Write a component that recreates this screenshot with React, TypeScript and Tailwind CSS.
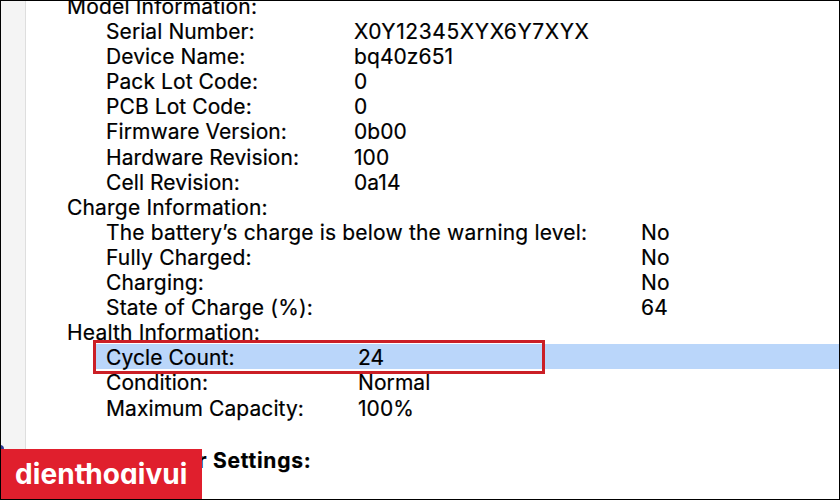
import { clsx } from "clsx";

type Row = { label: string; value: string; wide?: boolean; selected?: boolean };
type Section = { title: string; columns: string; tight?: boolean; rows: Row[] };

const sections: Section[] = [
  {
    title: "Model Information:",
    columns: "grid-cols-[248px_1fr]",
    tight: true,
    rows: [
      { label: "Serial Number:", value: "X0Y12345XYX6Y7XYX", wide: true },
      { label: "Device Name:", value: "bq40z651" },
      { label: "Pack Lot Code:", value: "0" },
      { label: "PCB Lot Code:", value: "0" },
      { label: "Firmware Version:", value: "0b00" },
      { label: "Hardware Revision:", value: "100" },
      { label: "Cell Revision:", value: "0a14" },
    ],
  },
  {
    title: "Charge Information:",
    columns: "grid-cols-[535px_1fr]",
    rows: [
      { label: "The battery’s charge is below the warning level:", value: "No" },
      { label: "Fully Charged:", value: "No" },
      { label: "Charging:", value: "No" },
      { label: "State of Charge (%):", value: "64" },
    ],
  },
  {
    title: "Health Information:",
    columns: "grid-cols-[252px_1fr]",
    tight: true,
    rows: [
      { label: "Cycle Count:", value: "24", selected: true },
      { label: "Condition:", value: "Normal" },
      { label: "Maximum Capacity:", value: "100%" },
    ],
  },
];

export default function App() {
  return (
    <div className="relative flex h-[500px] w-[840px] overflow-hidden bg-white font-['Inter',sans-serif] text-[21px] leading-[25.1px] tracking-[0.18px] text-black [-webkit-text-stroke:0.2px_#000]">
      <div className="w-[26px] shrink-0 border-r border-[#dedede] bg-[#f4f4f4]" />
      <main className="-mt-[6px] flex-1">
        {sections.map((s) => (
          <section key={s.title}>
            <h2 className="pl-[41px]">{s.title}</h2>
            <div className={clsx(s.tight && "tracking-[0.08px]")}>
              {s.rows.map((r) => (
                <InfoRow key={r.label} row={r} columns={s.columns} />
              ))}
            </div>
          </section>
        ))}
        <h2 className="mt-[27px] pl-[172px] font-bold tracking-[0.75px]">r Settings:</h2>
      </main>

      {/* marker around the cycle count */}
      <div className="absolute top-[340px] left-[93px] h-[34px] w-[452px] border-[3px] border-[#cb1f26]" />

      <div className="absolute top-[445px] -left-[4px] size-2 rounded-full bg-[#2c3a94]" />
      <Watermark />
      <div className="pointer-events-none absolute inset-0 border border-black" />
    </div>
  );
}

function InfoRow({ row, columns }: { row: Row; columns: string }) {
  return (
    <div
      className={clsx(
        "ml-[70px] grid pl-[10px]",
        columns,
        row.selected && "-mt-px mb-px h-[25.1px] bg-[#bad6fa] pt-px",
      )}
    >
      <span>{row.label}</span>
      <span className={clsx(row.wide && "tracking-[0.6px]")}>{row.value}</span>
    </div>
  );
}

function Watermark() {
  return (
    <div className="absolute bottom-0 left-0 flex h-[51px] w-[202px] items-center bg-[#e01f2d] pl-[15px] text-[28px] font-bold tracking-[0.1px] text-white [-webkit-text-stroke:0] [font-feature-settings:'cv11']">
      dienthoaivui
      {/* the wordmark joins its t and h with one crossbar */}
      <span className="absolute top-[19px] left-[82px] h-[3px] w-[8px] bg-white" />
    </div>
  );
}
